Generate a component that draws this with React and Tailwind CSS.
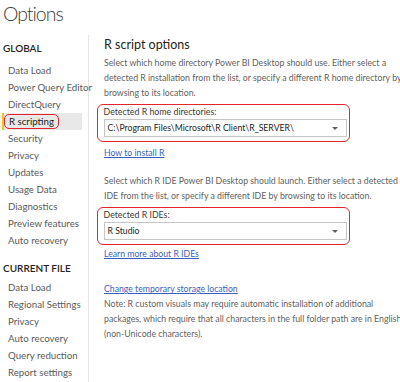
import React from "react";

const font = "font-['Lato',sans-serif]";

function Item({ children, selected }) {
  if (selected) {
    return (
      <div className="relative h-[17px] ml-[2px] mr-[6px] bg-[#e8e8e8] border-l-2 border-[#f2c811] flex items-center">
        <span className="ml-[0px] px-[4px] h-[15px] leading-[13px] border border-[#e3262c] rounded-[5px] text-[9.7px] text-[#252423]">
          {children}
        </span>
      </div>
    );
  }
  return (
    <div className="h-[17px] leading-[17px] pl-[8px] text-[9.7px] text-[#5a5a5a] whitespace-nowrap">{children}</div>
  );
}

function Lines({ lines, className = "" }) {
  return (
    <div className={"text-[8.75px] leading-[15px] text-[#5f5f5f] whitespace-nowrap " + className}>
      {lines.map((l, i) => (
        <div key={i}>{l}</div>
      ))}
    </div>
  );
}

function Select({ label, value }) {
  return (
    <div className="-ml-[7px] mt-[4px] w-[253px] border-[1.5px] border-[#e3262c] rounded-[6px] pl-[5.5px] pr-[2.5px] pt-[1px] pb-[4px]">
      <div className="h-[12px] leading-[12px] text-[8.8px] text-[#3b3a39]">{label}</div>
      <div className="mt-[1px] h-[18px] border border-[#c8c6c4] flex items-center justify-between pl-[3px] pr-[8px]">
        <span className="text-[8.7px] text-[#252423] leading-[16px]">{value}</span>
        <span className="w-0 h-0 border-l-[3px] border-r-[3px] border-t-[3px] border-l-transparent border-r-transparent border-t-[#605e5c]" />
      </div>
    </div>
  );
}

function Link({ children, className = "" }) {
  return (
    <div className={"h-[15px] leading-[15px] text-[8.7px] text-[#3b5fc0] underline " + className}>{children}</div>
  );
}

export default function App() {
  return (
    <div className={"w-[400px] h-[382px] bg-white overflow-hidden " + font}>
      <div className="h-[35px] pl-[3px] text-[19.5px] tracking-[-1px] leading-[27px] font-light text-[#3b3b3b]">Options</div>
      <div className="flex h-[347px]">
        <div className="w-[89px] shrink-0 border-r border-[#e6e6e6]">
          <div className="mt-[6px] h-[14px] leading-[14px] pl-[3px] text-[10px] font-semibold text-[#252423]">GLOBAL</div>
          <div className="mt-[7px]">
            <Item>Data Load</Item>
            <Item>Power Query Editor</Item>
            <Item>DirectQuery</Item>
            <Item selected>R scripting</Item>
            <Item>Security</Item>
            <Item>Privacy</Item>
            <Item>Updates</Item>
            <Item>Usage Data</Item>
            <Item>Diagnostics</Item>
            <Item>Preview features</Item>
            <Item>Auto recovery</Item>
          </div>
          <div className="mt-[12px] h-[14px] leading-[14px] pl-[3px] text-[10px] font-semibold text-[#252423]">CURRENT FILE</div>
          <div className="mt-[4px]">
            <Item>Data Load</Item>
            <Item>Regional Settings</Item>
            <Item>Privacy</Item>
            <Item>Auto recovery</Item>
            <Item>Query reduction</Item>
            <Item>Report settings</Item>
          </div>
        </div>
        <div className="pl-[15px] flex-1">
          <div className="h-[20px] leading-[20px] text-[12.5px] text-[#252423]">R script options</div>
          <Lines
            lines={[
              "Select which home directory Power BI Desktop should use. Either select a",
              "detected R installation from the list, or specify a different R home directory by",
              "browsing to its location.",
            ]}
          />
          <Select label="Detected R home directories:" value="C:\Program Files\Microsoft\R Client\R_SERVER\" />
          <Link className="mt-[3px]">How to install R</Link>
          <Lines
            className="mt-[13px]"
            lines={[
              "Select which R IDE Power BI Desktop should launch. Either select a detected",
              "IDE from the list, or specify a different IDE by browsing to its location.",
            ]}
          />
          <Select label="Detected R IDEs:" value="R Studio" />
          <Link className="mt-[1px]">Learn more about R IDEs</Link>
          <Link className="mt-[20px]">Change temporary storage location</Link>
          <Lines
            className="leading-[14.5px]"
            lines={[
              "Note: R custom visuals may require automatic installation of additional",
              "packages, which require that all characters in the full folder path are in English",
              "(non-Unicode characters).",
            ]}
          />
        </div>
      </div>
    </div>
  );
}
